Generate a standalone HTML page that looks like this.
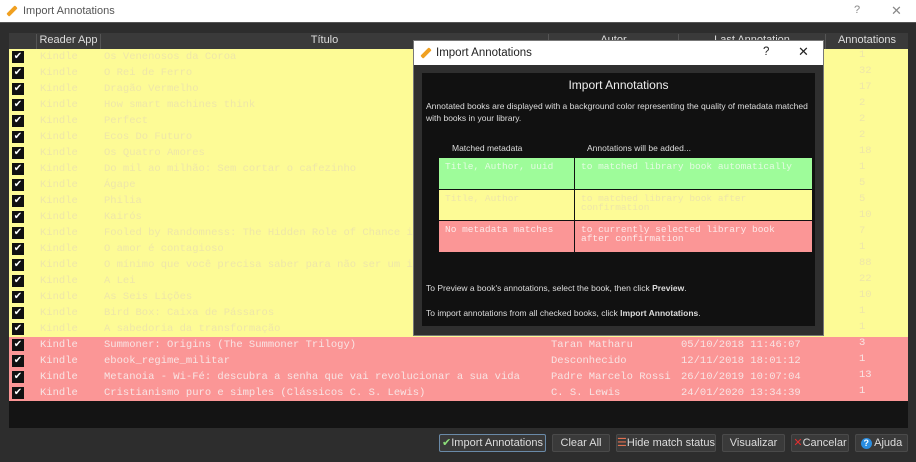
<!DOCTYPE html>
<html><head><meta charset="utf-8"><style>
*{margin:0;padding:0;box-sizing:border-box}
body{width:916px;height:462px;background:#2d2d2d;font-family:"Liberation Sans",sans-serif;font-size:11px;position:relative;overflow:hidden}
.tb{position:absolute;left:0;top:0;width:916px;height:23px;background:#fff;border-bottom:1px solid #555;color:#555;font-size:11px}
.tb .t{position:absolute;left:23px;top:5px}
.pen{position:absolute;width:12px;height:4px;background:#f0a020;transform:rotate(-45deg);border-radius:1px}
.table{position:absolute;left:9px;top:33px;width:899px;height:395px;background:#141414}
.hdr{position:absolute;left:0;top:0;width:899px;height:16px;background:#3a3a3a;color:#ddd;font-size:11px}
.hdr div{position:absolute;top:1px;height:15px;border-left:1px solid #555;text-align:center}
.row{position:absolute;left:0;width:899px;height:16px;font-family:"Liberation Mono",monospace;font-size:10.5px;color:#eee6a8}
.y{background:#fdfb96}
.r{background:#fb9696;color:#f8e4e4}
.row span{position:absolute;top:2px;white-space:nowrap}
.cb{position:absolute;left:3px;top:2px;width:12px;height:12px;background:#111;color:#fff;font-size:10px;line-height:12px;text-align:center;font-family:"DejaVu Sans",sans-serif}
.dlg{position:absolute;left:413px;top:40px;width:411px;height:296px;background:#2f2f2f;border:1px solid #777}
.dlg .dt{position:absolute;left:0;top:0;width:409px;height:24px;background:#fff;color:#222;font-size:11.5px}
.inner{position:absolute;left:8px;top:32px;width:393px;height:253px;background:#111;color:#ddd;font-size:8.5px}
.cell{position:absolute;font-family:"Liberation Mono",monospace;font-size:9.5px;line-height:9px;padding:4px 6px;white-space:normal}
.g{background:#9efc9a;color:#e4fbe2}
.yy{background:#fdfb96;color:#eee6a8}
.rr{background:#fb9696;color:#fde8e8}
.btn{position:absolute;top:434px;height:18px;background:#3a3a3a;border:1px solid #4a4a4a;color:#ddd;font-size:11px;text-align:center;line-height:16px;border-radius:2px;white-space:nowrap}
</style></head><body>
<div class="tb"><div class="pen" style="left:6px;top:9px"></div><span class="t">Import Annotations</span>
<span style="position:absolute;left:854px;top:4px;color:#888">?</span><span style="position:absolute;left:891px;top:3px;color:#888;font-size:13px">✕</span></div>

<div class="table">
<div class="hdr">
<div style="left:0;width:27px;border:none"></div>
<div style="left:27px;width:64px">Reader App</div>
<div style="left:91px;width:448px">Título</div>
<div style="left:539px;width:130px">Autor</div>
<div style="left:669px;width:147px">Last Annotation</div>
<div style="left:816px;width:83px">Annotations</div>
</div>
<div id="rows"></div>
</div>

<div class="dlg">
<div class="dt"><div class="pen" style="left:6px;top:10px"></div><span style="position:absolute;left:22px;top:6px">Import Annotations</span>
<span style="position:absolute;left:349px;top:5px">?</span><span style="position:absolute;left:384px;top:3px;font-size:13px">✕</span></div>
<div class="inner">
<div style="position:absolute;left:0;width:393px;top:5px;text-align:center;font-size:12px;color:#eee">Import Annotations</div>
<div style="position:absolute;left:4px;top:27px;line-height:12px;width:385px">Annotated books are displayed with a background color representing the quality of metadata matched with books in your library.</div>
<div style="position:absolute;left:30px;top:70px">Matched metadata</div>
<div style="position:absolute;left:165px;top:70px">Annotations will be added...</div>
<div style="position:absolute;left:17px;top:85px;width:373px;height:94px;background:#111">
<div class="cell g" style="left:0;top:0;width:135px;height:31px">Title, Author, uuid</div>
<div class="cell g" style="left:136px;top:0;width:237px;height:31px">to matched library book automatically</div>
<div class="cell yy" style="left:0;top:32px;width:135px;height:30px">Title, Author</div>
<div class="cell yy" style="left:136px;top:32px;width:237px;height:30px">to matched library book after confirmation</div>
<div class="cell rr" style="left:0;top:63px;width:135px;height:31px">No metadata matches</div>
<div class="cell rr" style="left:136px;top:63px;width:237px;height:31px">to currently selected library book after confirmation</div>
</div>
<div style="position:absolute;left:4px;top:210px">To Preview a book's annotations, select the book, then click <b>Preview</b>.</div>
<div style="position:absolute;left:4px;top:235px">To import annotations from all checked books, click <b>Import Annotations</b>.</div>
</div>
</div>

<div class="btn" style="left:439px;width:107px;border-color:#6a8aa8"><span style="color:#8ee07a">✔</span>Import Annotations</div>
<div class="btn" style="left:552px;width:58px">Clear All</div>
<div class="btn" style="left:616px;width:100px"><span style="color:#e07050">☰</span>Hide match status</div>
<div class="btn" style="left:722px;width:63px">Visualizar</div>
<div class="btn" style="left:791px;width:58px"><span style="color:#e03030">✕</span>Cancelar</div>
<div class="btn" style="left:855px;width:53px"><span style="display:inline-block;width:11px;height:11px;border-radius:50%;background:#2a8de0;color:#fff;font-size:9px;line-height:11px;font-weight:bold">?</span> Ajuda</div>

<script>
var d=[["Os Venenosos da Coroa","","","1"],["O Rei de Ferro","","","32"],["Dragão Vermelho","","","17"],["How smart machines think","","","2"],["Perfect","","","2"],["Ecos Do Futuro","","","2"],["Os Quatro Amores","","","18"],["Do mil ao milhão: Sem cortar o cafezinho","","","1"],["Ágape","","","5"],["Philia","","","5"],["Kairós","","","10"],["Fooled by Randomness: The Hidden Role of Chance in Life","","","7"],["O amor é contagioso","","","1"],["O mínimo que você precisa saber para não ser um idiota","","","88"],["A Lei","","","22"],["As Seis Lições","","","10"],["Bird Box: Caixa de Pássaros","","","1"],["A sabedoria da transformação","","","1"],
["Summoner: Origins (The Summoner Trilogy)","Taran Matharu","05/10/2018 11:46:07","3"],["ebook_regime_militar","Desconhecido","12/11/2018 18:01:12","1"],["Metanoia - Wi-Fé: descubra a senha que vai revolucionar a sua vida","Padre Marcelo Rossi","26/10/2019 10:07:04","13"],["Cristianismo puro e simples (Clássicos C. S. Lewis)","C. S. Lewis","24/01/2020 13:34:39","1"]];
var h="";d.forEach(function(r,i){h+='<div class="row '+(i<18?'y':'r')+'" style="top:'+(16+i*16)+'px"><div class="cb">✔</div><span style="left:31px">Kindle</span><span style="left:95px">'+r[0]+'</span><span style="left:542px">'+r[1]+'</span><span style="left:672px">'+r[2]+'</span><span style="left:850px;top:0">'+r[3]+'</span></div>';});
document.getElementById("rows").innerHTML=h;
</script>
</body></html>
